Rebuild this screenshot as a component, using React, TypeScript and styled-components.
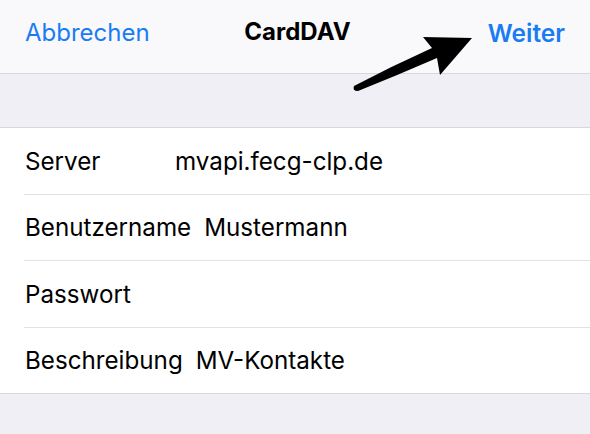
import React from "react";
import styled, { createGlobalStyle } from "styled-components";

const Global = createGlobalStyle`
  html, body { margin: 0; padding: 0; background: #f0eff5; }
  body { font-family: Inter, "Liberation Sans", sans-serif; -webkit-font-smoothing: antialiased; }
`;

const Screen = styled.div`
  width: 590px;
  height: 434px;
  background: #f0eff5;
  display: flex;
  flex-direction: column;
  overflow: hidden;
`;

const NavBar = styled.header`
  position: relative;
  flex: none;
  height: 74px;
  box-sizing: border-box;
  background: #f9f9fb;
  border-bottom: 1px solid #d8d8dc;
  display: flex;
  align-items: center;
  justify-content: space-between;
  padding: 0 25px 8px 25px;
`;

const NavButton = styled.span<{ $bold?: boolean; $size: number }>`
  color: #1a7cf2;
  font-size: ${(p) => p.$size}px;
  font-weight: ${(p) => (p.$bold ? 600 : 400)};
`;

const Title = styled.span`
  position: absolute;
  left: 0;
  right: 0;
  top: 17px;
  padding-left: 5px;
  text-align: center;
  font-size: 24px;
  font-weight: 700;
  color: #000;
  pointer-events: none;
`;

const Arrow = styled.svg`
  position: absolute;
  left: 340px;
  top: 20px;
`;

const Spacer = styled.div`
  height: 53px;
  flex: none;
  border-bottom: 1px solid #d8d8dc;
`;

const List = styled.div`
  background: #ffffff;
  border-bottom: 1px solid #d8d8dc;
  display: flex;
  flex-direction: column;
  padding-left: 24px;
`;

const Row = styled.div<{ $last?: boolean; $h: number }>`
  height: ${(p) => p.$h}px;
  box-sizing: border-box;
  display: flex;
  align-items: center;
  gap: 13px;
  padding-left: 1px;
  border-bottom: ${(p) => (p.$last ? "none" : "1px solid #e2e2e6")};
`;

const Label = styled.span`
  min-width: 137px;
  font-size: 24.2px;
  color: #000;
`;

const Value = styled.span`
  font-size: 24.2px;
  color: #000;
`;

const rows = [
  { label: "Server", value: "mvapi.fecg-clp.de", h: 67 },
  { label: "Benutzername", value: "Mustermann", h: 66 },
  { label: "Passwort", value: "", h: 67 },
  { label: "Beschreibung", value: "MV-Kontakte", h: 65 },
];

export default function App() {
  return (
    <Screen>
      <Global />
      <NavBar>
        <NavButton $size={24}>Abbrechen</NavButton>
        <Title>CardDAV</Title>
        <NavButton $bold $size={24.5}>
          Weiter
        </NavButton>
        <Arrow width="140" height="80" viewBox="340 20 140 80">
          <path
            d="M472 38 L423 37 L432 48 Q392 66 354 86 Q352 91 358 91 Q398 75 437 58 L440 75 Z"
            fill="#000"
          />
        </Arrow>
      </NavBar>
      <Spacer />
      <List>
        {rows.map((r, i) => (
          <Row key={r.label} $h={r.h} $last={i === rows.length - 1}>
            <Label>{r.label}</Label>
            {r.value && <Value>{r.value}</Value>}
          </Row>
        ))}
      </List>
    </Screen>
  );
}
